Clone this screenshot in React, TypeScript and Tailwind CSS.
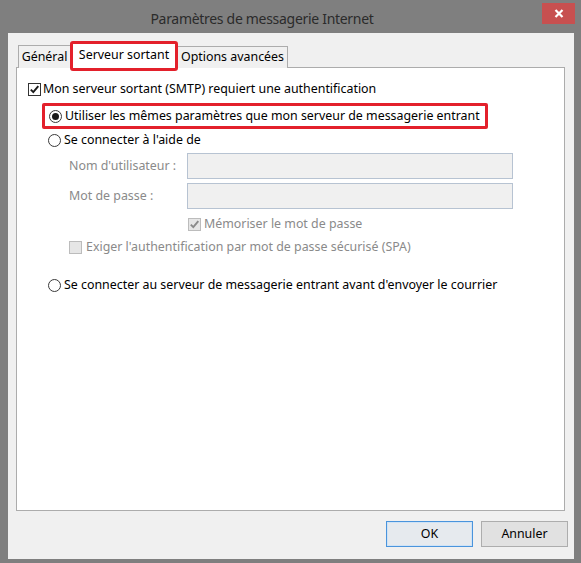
import React from 'react'

function Check({ color }: { color: string }) {
  return (
    <svg width="11" height="11" viewBox="0 0 11 11">
      <path d="M1.8 5.6 L4.3 8.2 L9.3 2.2" fill="none" stroke={color} strokeWidth="1.9" />
    </svg>
  )
}

function Checkbox({ checked, disabled }: { checked?: boolean; disabled?: boolean }) {
  return (
    <span
      className={
        disabled
          ? 'w-[13px] h-[13px] shrink-0 border border-[#bcbcbc] bg-[#e6e6e6] flex items-center justify-center'
          : 'w-[13px] h-[13px] shrink-0 border border-[#333] bg-white flex items-center justify-center'
      }
    >
      {checked && <Check color={disabled ? '#8a8a8a' : '#1a1a1a'} />}
    </span>
  )
}

function Radio({ checked }: { checked?: boolean }) {
  return (
    <span className="w-[13px] h-[13px] shrink-0 rounded-full border border-[#3a3a3a] bg-white flex items-center justify-center">
      {checked && <span className="w-[7px] h-[7px] rounded-full bg-[#1a1a1a]" />}
    </span>
  )
}

function Field({ label }: { label: string }) {
  return (
    <div className="flex items-center h-[26px] pl-[52px]">
      <span className="w-[118px] text-[#8a8a8a]">{label}</span>
      <div className="w-[326px] h-[26px] border border-[#b7c3d2] bg-[#f0f0f0]" />
    </div>
  )
}

export default function App() {
  return (
    <div className="w-[581px] h-[563px] bg-[#7f7f7f] flex flex-col font-['Noto_Sans',sans-serif] text-[12.4px] text-black">
      {/* title bar */}
      <div className="relative h-[33px] flex items-center pt-[3px]">
        <span className="flex-1 text-center pr-[57px] text-[14px] tracking-[-0.3px] text-[#2b2b2b]">
          Paramètres de messagerie Internet
        </span>
        <div className="absolute right-[6px] top-[3px] w-[33px] h-[21px] bg-[#c75050] flex items-center justify-center">
          <svg width="10" height="9" viewBox="0 0 10 9">
            <path d="M1.5 1 L8.5 8 M8.5 1 L1.5 8" stroke="white" strokeWidth="2.2" />
          </svg>
        </div>
      </div>

      {/* client area */}
      <div className="ml-[8px] mr-[7px] mb-[4px] flex-1 bg-[#f0f0f0] flex flex-col pt-[10px] pl-[8px] pr-[9px]">
        {/* tabs */}
        <div className="relative z-10 flex items-end h-[25px] -mb-px pl-[2px]">
          <div className="w-[53px] h-[23px] border border-b-0 border-[#acacac] bg-[#f0f0f0] flex items-center justify-center">
            Général
          </div>
          <div className="relative w-[106px] h-[25px] border border-b-0 border-[#acacac] bg-white flex items-center justify-center pb-[2px]">
            Serveur sortant
            <span className="absolute -left-[2px] -right-[2px] -top-[3px] -bottom-[3px] border-[3px] border-[#e3202b] rounded-[3px]" />
          </div>
          <div className="w-[111px] h-[22px] border border-b-0 border-[#acacac] bg-[#f0f0f0] flex items-center justify-center">
            Options avancées
          </div>
        </div>

        {/* panel */}
        <div className="h-[444px] border border-[#acacac] bg-white flex flex-col pt-[9px]">
          <div className="flex items-center h-[24px] pl-[11px] gap-[2px]">
            <Checkbox checked />
            <span>Mon serveur sortant (SMTP) requiert une authentification</span>
          </div>

          <div className="mt-[2px] ml-[25px] w-[446px] h-[26px] border-[3px] border-[#e3202b] rounded-[2px] flex items-center pl-[4px] gap-[3px]">
            <Radio checked />
            <span>Utiliser les mêmes paramètres que mon serveur de messagerie entrant</span>
          </div>

          <div className="flex items-center h-[22px] pl-[31px] gap-[3px]">
            <Radio />
            <span>Se connecter à l'aide de</span>
          </div>

          <div className="mt-[2px]">
            <Field label="Nom d'utilisateur :" />
          </div>
          <div className="mt-[4px]">
            <Field label="Mot de passe :" />
          </div>

          <div className="mt-[4px] flex items-center h-[22px] pl-[171px] gap-[3px] text-[#8a8a8a]">
            <Checkbox checked disabled />
            <span>Mémoriser le mot de passe</span>
          </div>

          <div className="flex items-center h-[24px] pl-[52px] gap-[4px] text-[#8a8a8a]">
            <Checkbox disabled />
            <span>Exiger l'authentification par mot de passe sécurisé (SPA)</span>
          </div>

          <div className="mt-[14px] flex items-center h-[24px] pl-[31px] gap-[3px]">
            <Radio />
            <span>Se connecter au serveur de messagerie entrant avant d'envoyer le courrier</span>
          </div>
        </div>

        {/* buttons */}
        <div className="mt-[10px] flex justify-end gap-[8px] -mr-[3px]">
          <button className="w-[87px] h-[26px] border border-[#4a94dc] bg-[#e6eaee] shadow-[inset_0_0_0_1px_#cfe3f6]">
            OK
          </button>
          <button className="w-[87px] h-[26px] border border-[#adadad] bg-[#e1e1e1]">
            Annuler
          </button>
        </div>
      </div>
    </div>
  )
}
